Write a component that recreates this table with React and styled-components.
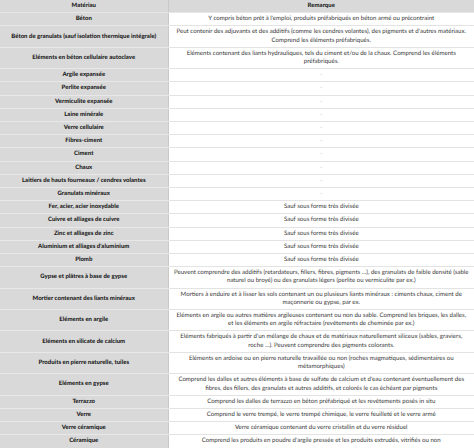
import React from 'react';
import styled, { createGlobalStyle } from 'styled-components';

const GlobalStyle = createGlobalStyle`
  html, body {
    margin: 0;
    padding: 0;
    background: #fff;
  }
  body {
    font-family: Lato, "Noto Sans", "Liberation Sans", sans-serif;
    text-rendering: geometricPrecision;
  }
`;

const SAUF = ['Sauf sous forme très divisée'];

// chaque remarque est découpée comme dans le tableau d'origine
const ROWS = [
  ['Béton', ["Y compris béton prêt à l'emploi, produits préfabriqués en béton armé ou précontraint"]],
  ['Béton de granulats (sauf isolation thermique intégrale)', [
    "Peut contenir des adjuvants et des additifs (comme les cendres volantes), des pigments et d'autres matériaux.",
    'Comprend les éléments préfabriqués.',
  ]],
  ['Eléments en béton cellulaire autoclave', [
    'Eléments contenant des liants hydrauliques, tels du ciment et/ou de la chaux. Comprend les éléments',
    'préfabriqués.',
  ]],
  ['Argile expansée', null],
  ['Perlite expansée', null],
  ['Vermiculite expansée', null],
  ['Laine minérale', null],
  ['Verre cellulaire', null],
  ['Fibres-ciment', null],
  ['Ciment', null],
  ['Chaux', null],
  ['Laitiers de hauts fourneaux / cendres volantes', null],
  ['Granulats minéraux', null],
  ['Fer, acier, acier inoxydable', SAUF],
  ['Cuivre et alliages de cuivre', SAUF],
  ['Zinc et alliages de zinc', SAUF],
  ["Aluminium et alliages d'aluminium", SAUF],
  ['Plomb', SAUF],
  ['Gypse et plâtres à base de gypse', [
    'Peuvent comprendre des additifs (retardateurs, fillers, fibres, pigments …), des granulats de faible densité (sable',
    'naturel ou broyé) ou des granulats légers (perlite ou vermiculite par ex.)',
  ]],
  ['Mortier contenant des liants minéraux', [
    'Mortiers à enduire et à lisser les sols contenant un ou plusieurs liants minéraux : ciments chaux, ciment de',
    'maçonnerie ou gypse, par ex.',
  ]],
  ['Eléments en argile', [
    'Eléments en argile ou autres matières argileuses contenant ou non du sable. Comprend les briques, les dalles,',
    'et les éléments en argile réfractaire (revêtements de cheminée par ex.)',
  ]],
  ['Eléments en silicate de calcium', [
    "Eléments fabriqués à partir d'un mélange de chaux et de matériaux naturellement siliceux (sables, graviers,",
    'roche …). Peuvent comprendre des pigments colorants.',
  ]],
  ['Produits en pierre naturelle, tuiles', [
    'Eléments en ardoise ou en pierre naturelle travaillée ou non (roches magmatiques, sédimentaires ou',
    'métamorphiques)',
  ]],
  ['Eléments en gypse', [
    "Comprend les dalles et autres éléments à base de sulfate de calcium et d'eau contenant éventuellement des",
    'fibres, des fillers, des granulats et autres additifs, et colorés le cas échéant par pigments',
  ]],
  ['Terrazzo', ['Comprend les dalles de terrazzo en béton préfabriqué et les revêtements posés in situ']],
  ['Verre', ['Comprend le verre trempé, le verre trempé chimique, le verre feuilleté et le verre armé']],
  ['Verre céramique', ['Verre céramique contenant du verre cristallin et du verre résiduel']],
  ['Céramique', ["Comprend les produits en poudre d'argile pressée et les produits extrudés, vitrifiés ou non"]],
];

const Table = styled.table`
  width: 474px;
  border-collapse: collapse;
  table-layout: fixed;
  line-height: 8.2px;
`;

const HeadCell = styled.th`
  background: #d9d9d9;
  color: #1c1c1c;
  font-size: 6px;
  font-weight: 900;
  text-align: center;
  padding: 2px 4px;
  border-bottom: 1px solid #e6e6e6;
  border-right: ${(p) => (p.$first ? '1px solid #c9c9c9' : 'none')};
`;

const NameCell = styled.td`
  background: #d9d9d9;
  color: #1a1a1a;
  font-size: 6px;
  font-weight: 900;
  text-align: center;
  vertical-align: middle;
  padding: 2px 4px;
  border-bottom: 1px solid #e8e8e8;
  border-right: 1px solid #c9c9c9;
`;

const NoteCell = styled.td`
  background: #fff;
  color: #383838;
  font-size: 6.1px;
  text-align: center;
  vertical-align: middle;
  padding: 2px 4px;
  border-bottom: 1px solid #e3e3e3;
  overflow: hidden;
`;

const NoteLine = styled.span`
  display: block;
  white-space: nowrap;
`;

const Dash = styled.span`
  color: #a0a0a0;
  font-size: 5px;
`;

export default function App() {
  return (
    <>
      <GlobalStyle />
      <Table>
        <colgroup>
          <col style={{ width: 168 }} />
          <col />
        </colgroup>
        <thead>
          <tr>
            <HeadCell $first>Matériau</HeadCell>
            <HeadCell>Remarque</HeadCell>
          </tr>
        </thead>
        <tbody>
          {ROWS.map(([name, note]) => (
            <tr key={name}>
              <NameCell>{name}</NameCell>
              <NoteCell>
                {note ? note.map((line) => <NoteLine key={line}>{line}</NoteLine>) : <Dash>-</Dash>}
              </NoteCell>
            </tr>
          ))}
        </tbody>
      </Table>
    </>
  );
}
